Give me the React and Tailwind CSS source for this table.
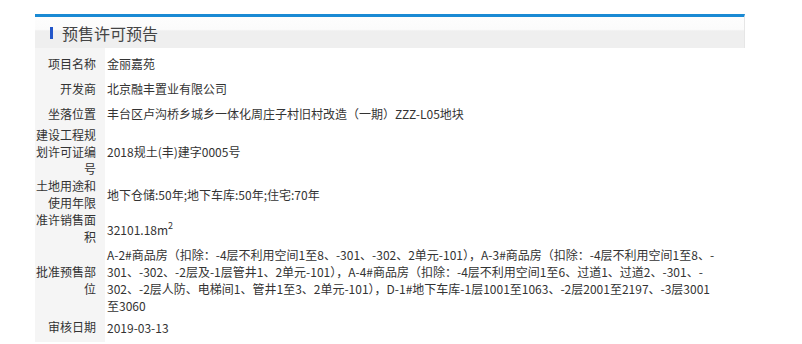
import React from "react";

const font = { fontFamily: '"Noto Sans CJK SC", "Microsoft YaHei", sans-serif' };

function Row({ label, children, single = false, extra = "" }) {
  return (
    <div className={`flex ${single ? "h-[25px]" : ""} ${extra}`}>
      <div className="w-[70px] shrink-0 bg-[#f5f5f5] pr-[9px] text-right leading-[17px] flex items-center justify-end">
        <div>{label}</div>
      </div>
      <div className="flex-1 pl-[2px] leading-[17px] flex items-center">
        <div>{children}</div>
      </div>
    </div>
  );
}

export default function App() {
  return (
    <div className="w-[802px] h-[344px] bg-white pt-[14px] pl-[35px] text-[12px] text-[#333]" style={font}>
      <div className="w-[710px]">
        <div className="h-[34px] border-t-[3px] border-[#1a8ad4] border-r border-r-[#e6e6e6] bg-[linear-gradient(to_bottom,#fdfdfd_0%,#fbfbfb_40%,#efefef_45%,#efefef_100%)] flex items-center pl-[15px]">
          <div className="w-[3px] h-[12px] bg-[#2256c9] mr-[9px]" />
          <div className="text-[16px] text-[#444] leading-none">预售许可预告</div>
        </div>
        <div className="flex h-[3px]"><div className="w-[70px] bg-[#f5f5f5]" /></div>
        <Row label="项目名称" single>金丽嘉苑</Row>
        <Row label="开发商" single>北京融丰置业有限公司</Row>
        <Row label="坐落位置" single>丰台区卢沟桥乡城乡一体化周庄子村旧村改造（一期）ZZZ-L05地块</Row>
        <Row label={<>建设工程规<br />划许可证编<br />号</>}>2018规土(丰)建字0005号</Row>
        <Row label={<>土地用途和<br />使用年限</>}>地下仓储:50年;地下车库:50年;住宅:70年</Row>
        <Row label={<>准许销售面<br />积</>}>
          <span className="relative top-[2px]">32101.18m<span className="text-[9px] relative -top-[6px] align-baseline">2</span></span>
        </Row>
        <div className="flex h-[1px]"><div className="w-[70px] bg-[#f5f5f5]" /></div>
        <Row label={<>批准预售部<br />位</>}>
          <div className="whitespace-nowrap">A-2#商品房（扣除：-4层不利用空间1至8、-301、-302、2单元-101），A-3#商品房（扣除：-4层不利用空间1至8、-</div>
          <div className="whitespace-nowrap">301、-302、-2层及-1层管井1、2单元-101），A-4#商品房（扣除：-4层不利用空间1至6、过道1、过道2、-301、-</div>
          <div className="whitespace-nowrap">302、-2层人防、电梯间1、管井1至3、2单元-101），D-1#地下车库-1层1001至1063、-2层2001至2197、-3层3001</div>
          <div className="whitespace-nowrap">至3060</div>
        </Row>
        <Row label="审核日期" single>
          <span className="relative top-[1px]">2019-03-13</span>
        </Row>
        <div className="flex h-[3px]"><div className="w-[70px] bg-[#f5f5f5]" /></div>
      </div>
    </div>
  );
}
